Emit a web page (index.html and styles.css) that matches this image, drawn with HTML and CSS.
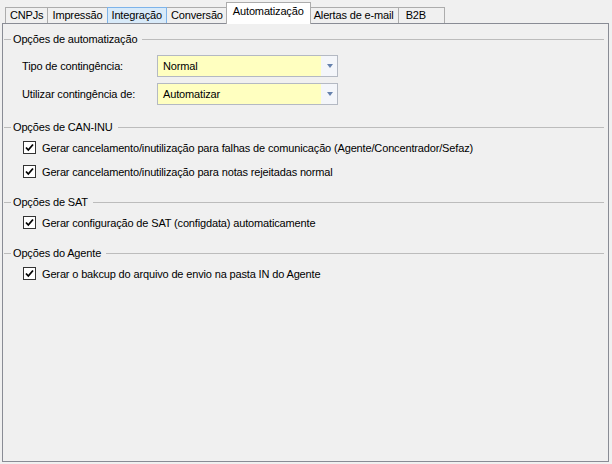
FILE: index.html
```html
<!DOCTYPE html>
<html lang="pt-BR">
<head>
    <meta charset="UTF-8">
    <title>Configurações</title>
    <link rel="stylesheet" href="styles.css">
</head>
<body>
    <div class="window">
        <div class="tabs">
            <div class="tab">CNPJs</div>
            <div class="tab">Impressão</div>
            <div class="tab hover">Integração</div>
            <div class="tab">Conversão</div>
            <div class="tab active">Automatização</div>
            <div class="tab">Alertas de e-mail</div>
            <div class="tab tab-min">B2B</div>
        </div>

        <div class="panel">
            <div class="group first">
                <div class="group-title"><span>Opções de automatização</span></div>
                <div class="field">
                    <label>Tipo de contingência:</label>
                    <div class="combo"><span>Normal</span><i class="arrow"></i></div>
                </div>
                <div class="field">
                    <label>Utilizar contingência de:</label>
                    <div class="combo"><span>Automatizar</span><i class="arrow"></i></div>
                </div>
            </div>

            <div class="group">
                <div class="group-title"><span>Opções de CAN-INU</span></div>
                <div class="check">
                    <span class="box"><svg width="11" height="11" viewBox="0 0 11 11"><path d="M2 5.5 L4.3 8 L9 2.5" fill="none" stroke="#000" stroke-width="1.8"/></svg></span>
                    Gerar cancelamento/inutilização para falhas de comunicação (Agente/Concentrador/Sefaz)
                </div>
                <div class="check">
                    <span class="box"><svg width="11" height="11" viewBox="0 0 11 11"><path d="M2 5.5 L4.3 8 L9 2.5" fill="none" stroke="#000" stroke-width="1.8"/></svg></span>
                    Gerar cancelamento/inutilização para notas rejeitadas normal
                </div>
            </div>

            <div class="group">
                <div class="group-title"><span>Opções de SAT</span></div>
                <div class="check">
                    <span class="box"><svg width="11" height="11" viewBox="0 0 11 11"><path d="M2 5.5 L4.3 8 L9 2.5" fill="none" stroke="#000" stroke-width="1.8"/></svg></span>
                    Gerar configuração de SAT (configdata) automaticamente
                </div>
            </div>

            <div class="group">
                <div class="group-title"><span>Opções do Agente</span></div>
                <div class="check">
                    <span class="box"><svg width="11" height="11" viewBox="0 0 11 11"><path d="M2 5.5 L4.3 8 L9 2.5" fill="none" stroke="#000" stroke-width="1.8"/></svg></span>
                    Gerar o bakcup do arquivo de envio na pasta IN do Agente
                </div>
            </div>
        </div>
    </div>
</body>
</html>
```

FILE: styles.css
```css
body {
    margin: 0;
    background-color: #f0f0f0;
    font-family: "Liberation Sans", Arial, sans-serif;
    font-size: 11px;
    letter-spacing: -0.15px;
    color: #000;
}

.window {
    padding: 2px 3px 2px 2px;
    height: 460px;
    display: flex;
    flex-direction: column;
}

.tabs {
    display: flex;
    align-items: flex-end;
    padding-left: 3px;
    height: 21px;
    position: relative;
    z-index: 1;
}

.tab {
    height: 15px;
    line-height: 15px;
    padding: 0 4px;
    border: 1px solid #acacac;
    border-bottom: none;
    border-left: none;
    background-color: #f0f0f0;
    white-space: nowrap;
}

.tab:first-child {
    border-left: 1px solid #acacac;
}

.tab.hover {
    background-color: #d8eaf9;
    border-color: #7eb4ea;
    border-left: 1px solid #7eb4ea;
    margin-left: -1px;
}

.tab.active {
    height: 21px;
    line-height: 17px;
    padding: 0 6px;
    background-color: #fff;
    border-left: 1px solid #acacac;
    margin: 0 -1px -1px -2px;
    position: relative;
}

.tab-min {
    min-width: 34px;
    padding-left: 7px;
}

.panel {
    flex: 1;
    border: 1px solid #898c95;
    background-color: #f0f0f0;
    padding: 8px 4px 0 1px;
}

.group {
    margin-top: 15px;
}

.group.first {
    margin-top: 0;
}

.group-title {
    display: flex;
    align-items: center;
    height: 14px;
    line-height: 14px;
}

.group-title::before {
    content: "";
    width: 7px;
    height: 1px;
    margin-right: 2px;
    background-color: #bcbcbc;
}

.group-title::after {
    content: "";
    flex: 1;
    height: 1px;
    margin-left: 5px;
    background-color: #bcbcbc;
}

.field {
    display: flex;
    align-items: center;
    margin-top: 9px;
    padding-left: 18px;
}

.field + .field {
    margin-top: 6px;
}

.field label {
    width: 135px;
}

.combo {
    width: 174px;
    height: 20px;
    border: 1px solid #b4b9c3;
    background: linear-gradient(to right, #ffffc0 163px, #f4f6fa 163px);
    display: flex;
    align-items: center;
    justify-content: space-between;
    padding-left: 5px;
}

.combo span {
    width: 150px;
}

.arrow {
    width: 0;
    height: 0;
    margin-right: 4px;
    border-left: 3px solid transparent;
    border-right: 3px solid transparent;
    border-top: 4px solid #6682ad;
}

.check {
    display: flex;
    align-items: center;
    height: 17px;
    margin-top: 5px;
    padding-left: 19px;
}

.check + .check {
    margin-top: 7px;
}

.box {
    width: 11px;
    height: 11px;
    border: 1px solid #333;
    background-color: #fff;
    margin-right: 6px;
    display: inline-flex;
}
```
